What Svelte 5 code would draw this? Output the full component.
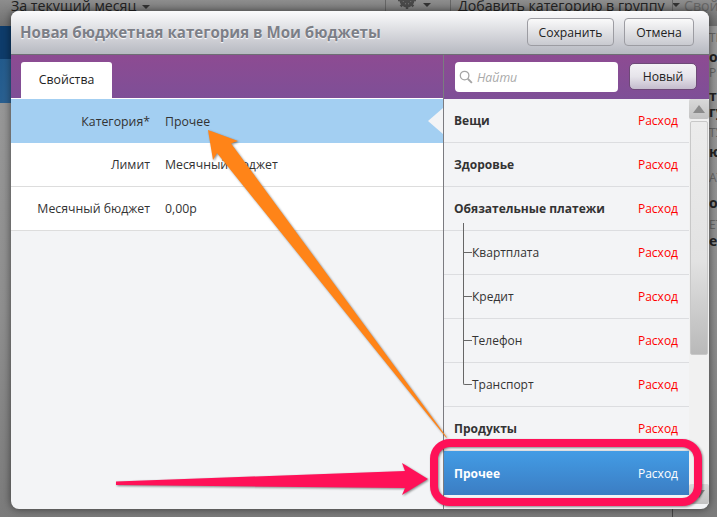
<script>
  const fields = [
    { label: 'Категория*', value: 'Прочее', active: true },
    { label: 'Лимит', value: 'Месячный бюджет' },
    { label: 'Месячный бюджет', value: '0,00р' }
  ]

  const categories = [
    { name: 'Вещи', top: true },
    { name: 'Здоровье', top: true },
    { name: 'Обязательные платежи', top: true },
    { name: 'Квартплата', first: true },
    { name: 'Кредит' },
    { name: 'Телефон' },
    { name: 'Транспорт', last: true },
    { name: 'Продукты', top: true },
    { name: 'Прочее', top: true, selected: true }
  ]

  const behind = [
    { text: 'ТП', gap: 5 },
    { text: 'ок', bold: true, gap: 2 },
    { text: 'РИ', gap: 9 },
    { text: 'т', bold: true, gap: 2 },
    { text: 'гу', bold: true, gap: 7 },
    { text: 'ТУ', gap: 5 },
    { text: 'ю', bold: true, gap: 12 },
    { text: 'АТ', gap: 11 },
    { text: 'од', bold: true, gap: 8 },
    { text: 'ЕТ', gap: 2 },
    { text: 'е', bold: true, gap: 0 }
  ]
</script>

<div class="page">
  <div class="topbar">
    <span class="period">За текущий месяц <i class="caret"></i></span>
    <span class="tool gear-tool">
      <svg width="20" height="20" viewBox="0 0 20 20"><circle cx="10" cy="10" r="6" fill="none" stroke="#4a4a4a" stroke-width="3" /><path d="M10 1v18M1 10h18M3.600 3.600l12.800 12.800M16.400 3.600L3.600 16.400" stroke="#4a4a4a" stroke-width="2.400" /></svg>
      <i class="caret"></i>
    </span>
    <span class="tool add-tool">Добавить категорию в группу <i class="caret"></i></span>
    <span class="tool own">Свой</span>
  </div>

  <div class="under">
    <div class="sidebar">
      <div class="side-dark"></div>
      <div class="side-blue"></div>
    </div>
    <div class="behind">
      {#each behind as line}
        <div class:bold={line.bold} style="margin-bottom: {line.gap}px">{line.text}</div>
      {/each}
    </div>
  </div>
  <div class="bottom-line"></div>

  <div class="dialog">
    <header class="head">
      <h2>Новая бюджетная категория в Мои бюджеты</h2>
      <div class="head-actions">
        <button class="btn save">Сохранить</button>
        <button class="btn cancel">Отмена</button>
      </div>
    </header>

    <div class="body">
      <section class="left">
        <div class="tabs">
          <div class="tab">Свойства</div>
        </div>
        <div class="fields">
          {#each fields as field}
            <div class="field" class:active={field.active}>
              <span class="label">{field.label}</span>
              <span class="value">{field.value}</span>
            </div>
          {/each}
        </div>
      </section>

      <section class="right">
        <div class="tools">
          <div class="search">
            <svg width="14" height="14" viewBox="0 0 15 15"><circle cx="6" cy="6" r="4.600" fill="none" stroke="#a5a5a5" stroke-width="1.400" /><path d="M9.400 9.400l4.400 4.400" stroke="#a5a5a5" stroke-width="2" /></svg>
            <span>Найти</span>
          </div>
          <button class="btn new">Новый</button>
        </div>

        <div class="list-wrap">
          <div class="list">
            {#each categories as cat}
              <div class="row" class:top={cat.top} class:child={!cat.top} class:selected={cat.selected}>
                {#if !cat.top}
                  <i class="branch" class:first={cat.first} class:last={cat.last}></i>
                {/if}
                <span class="name">{cat.name}</span>
                <span class="kind">Расход</span>
              </div>
            {/each}
          </div>
          <div class="scrollbar">
            <div class="arrow up"><i></i></div>
            <div class="thumb"></div>
            <div class="arrow down"><i></i></div>
          </div>
        </div>
      </section>
    </div>
  </div>

  <svg class="marks" width="717" height="517" viewBox="0 0 717 517">
    <g class="shadowed">
      <path fill="#ff8418" d="M208 130L238 141L231 143.500L447 437.500L446 437.500L217 153L213 160Z" />
    </g>
    <g class="shadowed">
      <path fill="#ff1158" d="M116 481.500L405 471L402 463L428 479L402 495L405 488L116 485Z" />
      <rect x="434" y="443" width="264" height="59" rx="16" fill="none" stroke="#ff1158" stroke-width="8" />
    </g>
  </svg>
</div>

<style>
  :global(body) {
    margin: 0;
  }

  .page {
    position: relative;
    width: 717px;
    height: 517px;
    overflow: hidden;
    background: linear-gradient(#9b9b9b, #8f8f8f 60%, #7b7b7b);
    font-family: "Open Sans", "Noto Sans", sans-serif;
    font-size: 12.3px;
    color: #333;
  }

  .topbar {
    display: flex;
    align-items: flex-start;
    height: 26px;
    background: linear-gradient(#8d8d8d, #6f6f6f);
    font-size: 14.2px;
    line-height: 12px;
    color: #222;
    overflow: hidden;
  }

  .period {
    flex-shrink: 0;
    width: 385px;
    padding-left: 11px;
    box-sizing: border-box;
  }

  .tool {
    flex-shrink: 0;
    display: flex;
    align-items: flex-start;
    gap: 5px;
    height: 26px;
    border-left: 1px solid #666;
    box-sizing: border-box;
  }

  .gear-tool {
    width: 53px;
    padding-left: 11px;
  }

  .gear-tool svg {
    margin-top: -10px;
  }

  .add-tool {
    width: 222px;
    margin-left: 12px;
    padding-left: 7px;
    white-space: nowrap;
  }

  .own {
    padding-left: 11px;
    color: #666;
    white-space: nowrap;
  }

  .caret {
    display: inline-block;
    width: 0;
    height: 0;
    margin-left: 2px;
    vertical-align: 2px;
    border: 4px solid transparent;
    border-top: 4px solid #333;
    border-bottom: 0;
  }

  .gear-tool .caret {
    margin-top: 3px;
    margin-left: 1px;
  }

  .add-tool .caret {
    margin-top: 3px;
  }

  .under {
    display: flex;
    justify-content: space-between;
  }

  .sidebar {
    width: 11px;
  }

  .side-dark {
    height: 33px;
    background: #0e3c6b;
  }

  .side-blue {
    height: 44px;
    background: linear-gradient(100deg, #225a8c, #2f6596);
  }

  .behind {
    width: 8px;
    padding-top: 5px;
    font-size: 12px;
    line-height: 14px;
    color: #666;
    overflow: hidden;
  }

  .behind .bold {
    font-size: 14px;
    font-weight: 700;
    color: #222;
  }

  .bottom-line {
    position: absolute;
    left: 672px;
    bottom: 0;
    width: 1px;
    height: 8px;
    background: #444;
  }

  .dialog {
    position: absolute;
    left: 11px;
    top: 11px;
    width: 698px;
    height: 498px;
    display: flex;
    flex-direction: column;
    background: #f3f4f6;
    border-radius: 8px;
    overflow: hidden;
    box-shadow: 0 0 8px rgba(0, 0, 0, 0.55);
  }

  .head {
    flex-shrink: 0;
    display: flex;
    align-items: center;
    justify-content: space-between;
    box-sizing: border-box;
    height: 44px;
    padding: 7px 15px 8px 9px;
    background: linear-gradient(#fbfbfc, #b7b9c1);
    border-bottom: 1px solid #6e6e74;
  }

  .head h2 {
    margin: 0;
    font-size: 15.1px;
    font-weight: 700;
    color: #7c7f87;
    text-shadow: 0 1px 1px #fff;
  }

  .head-actions {
    display: flex;
    gap: 10px;
  }

  .btn {
    box-sizing: border-box;
    height: 28px;
    padding: 0;
    font-family: inherit;
    font-size: 12.2px;
    color: #222;
    border: 1px solid #9c9ca2;
    border-radius: 4px;
    background: linear-gradient(#fafafa, #c9cad0);
  }

  .save {
    width: 87px;
  }

  .cancel {
    width: 70px;
  }

  .body {
    flex: 1;
    display: flex;
    min-height: 0;
  }

  .left {
    width: 432px;
    flex-shrink: 0;
    border-right: 1px solid #7b7b80;
  }

  .tabs {
    display: flex;
    align-items: flex-end;
    box-sizing: border-box;
    height: 44px;
    padding-left: 10px;
    background: linear-gradient(#8d4b92, #7e4f97);
    border-bottom: 1px solid #fff;
  }

  .tab {
    width: 91px;
    height: 36px;
    line-height: 36px;
    text-align: center;
    background: #fff;
    border-radius: 3px 3px 0 0;
    color: #222;
  }

  .field {
    display: flex;
    align-items: center;
    box-sizing: border-box;
    position: relative;
    height: 44px;
    background: #fff;
    border-bottom: 1px solid #ddd;
  }

  .field.active {
    background: #a3cff2;
    border-bottom: 0;
  }

  .field.active::after {
    content: '';
    position: absolute;
    right: 0;
    top: 9px;
    border: 13px solid transparent;
    border-left: 0;
    border-right: 15px solid #f3f4f6;
  }

  .label {
    width: 139px;
    text-align: right;
    white-space: nowrap;
  }

  .value {
    margin-left: 15px;
  }

  .right {
    flex: 1;
    min-width: 0;
    display: flex;
    flex-direction: column;
  }

  .tools {
    flex-shrink: 0;
    display: flex;
    align-items: flex-start;
    box-sizing: border-box;
    height: 44px;
    padding: 7px 0 0 11px;
    background: linear-gradient(#8d4b92, #7e4f97);
  }

  .search {
    display: flex;
    align-items: center;
    gap: 4px;
    box-sizing: border-box;
    width: 163px;
    height: 30px;
    padding-left: 4px;
    background: #fff;
    border-radius: 4px;
    color: #a9a9a9;
    font-style: italic;
  }

  .new {
    width: 68px;
    height: 27px;
    margin-left: 11px;
    margin-top: 1px;
    border: 1px solid #6e4a78;
    border-radius: 5px;
    background: linear-gradient(#f4f2f6, #e6e4ea 50%, #c4bccd);
  }

  .list-wrap {
    flex: 1;
    min-height: 0;
    display: flex;
    padding-bottom: 5px;
  }

  .list {
    flex: 1;
    min-width: 0;
    font-size: 12px;
  }

  .row {
    position: relative;
    display: flex;
    align-items: center;
    justify-content: space-between;
    box-sizing: border-box;
    height: 44px;
    padding: 0 11px 0 10px;
    border-bottom: 1px solid #dcdde0;
  }

  .row.child {
    padding-left: 28px;
  }

  .row.top .name {
    font-weight: 700;
    color: #333;
  }

  .kind {
    color: #ff0000;
  }

  .row.selected {
    background: linear-gradient(#439ce5, #3b7dc3);
    border-bottom: 0;
  }

  .row.selected .name,
  .row.selected .kind {
    color: #fff;
  }

  .branch {
    position: absolute;
    left: 19px;
    top: -22px;
    width: 9px;
    height: 44px;
    border-left: 1px solid #666;
    border-bottom: 1px solid #666;
    box-sizing: border-box;
  }

  .branch.first {
    top: -8px;
    height: 30px;
  }

  .branch.last {
    border-bottom-left-radius: 2px;
  }

  .scrollbar {
    width: 20px;
    flex-shrink: 0;
    display: flex;
    flex-direction: column;
    background: #f1f1f1;
  }

  .arrow {
    display: flex;
    align-items: center;
    justify-content: center;
    height: 20px;
    background: linear-gradient(#d9d9d9, #c2c2c2);
    border-radius: 2px;
  }

  .arrow i {
    border: 6px solid transparent;
    border-top: 0;
    border-bottom: 8px solid #8b8b8b;
  }

  .arrow.down i {
    border-bottom: 0;
    border-top: 8px solid #8b8b8b;
  }

  .thumb {
    height: 234px;
    margin: 2px 1px auto;
    border-radius: 2px;
    border: 1px solid #c8c8c8;
    box-sizing: border-box;
    background: linear-gradient(#ececec, #e2e2e2 60%, #b9b9b9);
  }

  .marks {
    position: absolute;
    left: 0;
    top: 0;
    pointer-events: none;
  }

  .shadowed {
    filter: drop-shadow(1px 1px 1px rgba(0, 0, 0, 0.45));
  }
</style>
